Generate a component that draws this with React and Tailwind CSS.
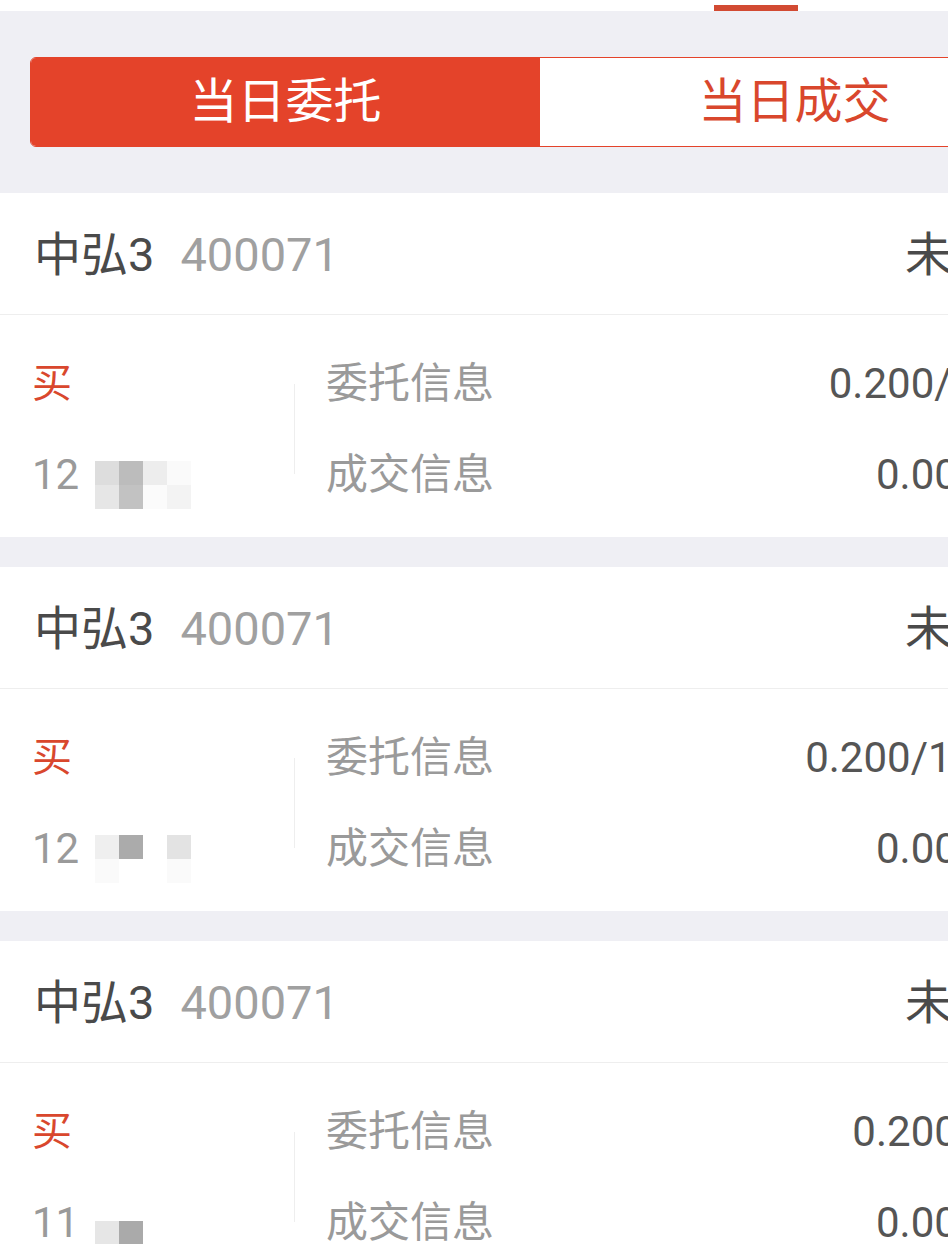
import React from "react";

const orders = [
  {
    name: "中弘3",
    code: "400071",
    status: "未成交",
    entrust: "0.200/1000",
    deal: "0.000/00",
    time: "12",
    blocks: [
      ["bg-[#dddddd]", "bg-[#bcbcbc]", "bg-[#ededed]", "bg-[#fafafa]"],
      ["bg-[#e6e6e6]", "bg-[#c2c2c2]", "bg-[#fbfbfb]", "bg-[#f3f3f3]"],
    ],
  },
  {
    name: "中弘3",
    code: "400071",
    status: "未成交",
    entrust: "0.200/10000",
    deal: "0.000/00",
    time: "12",
    blocks: [
      ["bg-[#efefef]", "bg-[#ababab]", "bg-white", "bg-[#e3e3e3]"],
      ["bg-[#fafafa]", "bg-white", "bg-white", "bg-[#fafafa]"],
    ],
  },
  {
    name: "中弘3",
    code: "400071",
    status: "未成交",
    entrust: "0.200/100",
    deal: "0.000/00",
    time: "11",
    blocks: [["bg-[#e6e6e6]", "bg-[#aaaaaa]", "bg-white", "bg-white"]],
  },
];

const Mosaic = ({ blocks }) => (
  <div className="flex flex-col">
    {blocks.map((row, i) => (
      <div key={i} className="flex">
        {row.map((c, j) => (
          <div key={j} className={`w-[24px] h-[24px] ${c}`} />
        ))}
      </div>
    ))}
  </div>
);

const OrderCard = ({ order }) => (
  <div className="bg-white mb-[30px]">
    <div className="h-[122px] flex items-center justify-between pl-[34px] pr-[34px] pt-[4px] border-b border-[#eeeeee]">
      <div className="flex items-baseline">
        <span className="text-[47px] text-[#4a4a4a]">{order.name}</span>
        <span className="text-[47px] text-[#a0a0a0] ml-[26px]">{order.code}</span>
      </div>
      <span className="text-[47px] text-[#4a4a4a]">{order.status}</span>
    </div>
    <div className="h-[222px] flex items-center pl-[32px] pr-[34px] pt-[6px]">
      <div className="w-[262px] flex flex-col">
        <div className="h-[91px] flex items-center text-[40px] text-[#d9472d]">买</div>
        <div className="h-[91px] flex items-center text-[42px] text-[#9a9a9a]">
          <span>{order.time}</span>
          <div className="ml-[16px] mt-[20px]">
            <Mosaic blocks={order.blocks} />
          </div>
        </div>
      </div>
      <div className="w-px h-[90px] bg-[#eeeeee]" />
      <div className="flex-1 flex flex-col pl-[31px]">
        <div className="h-[91px] flex items-center justify-between">
          <span className="text-[42px] text-[#9a9a9a]">委托信息</span>
          <span className="text-[42px] text-[#555555]">{order.entrust}</span>
        </div>
        <div className="h-[91px] flex items-center justify-between">
          <span className="text-[42px] text-[#9a9a9a]">成交信息</span>
          <span className="text-[42px] text-[#555555]">{order.deal}</span>
        </div>
      </div>
    </div>
  </div>
);

export default function App() {
  return (
    <div
      className="w-[948px] h-[1244px] overflow-hidden bg-[#efeff4]"
      style={{ fontFamily: 'Roboto, "Noto Sans CJK SC", sans-serif' }}
    >
      <div className="w-[1080px]">
        {/* top tab strip */}
        <div className="h-[11px] bg-white pl-[714px] pt-[5px]">
          <div className="w-[84px] h-[6px] bg-[#d24a32]" />
        </div>

        {/* segmented control */}
        <div className="px-[30px] pt-[46px] pb-[46px]">
          <div className="h-[90px] flex rounded-[6px] border border-[#e4432a] overflow-hidden">
            <div className="flex-1 bg-[#e4432a] flex items-center justify-center text-[48px] text-white leading-none">
              当日委托
            </div>
            <div className="flex-1 bg-white flex items-center justify-center text-[48px] text-[#d9472d] leading-none">
              当日成交
            </div>
          </div>
        </div>

        {orders.map((o, i) => (
          <OrderCard key={i} order={o} />
        ))}
      </div>
    </div>
  );
}
